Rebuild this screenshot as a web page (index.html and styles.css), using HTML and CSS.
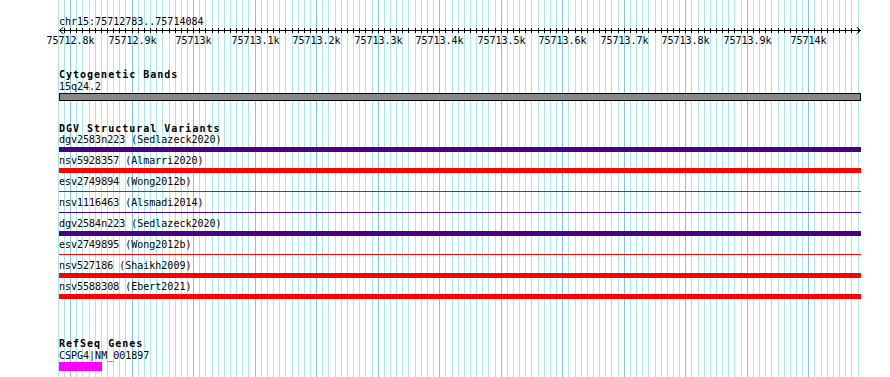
FILE: index.html
```html
<!DOCTYPE html>
<html lang="en">
<head>
  <meta charset="UTF-8" />
  <meta name="viewport" content="width=device-width, initial-scale=1.0" />
  <title>chr15:75712783..75714084</title>
  <link rel="stylesheet" href="styles.css">
</head>
<body>
  <div class="browser">
    <svg class="guides" id="guides" width="890" height="377"></svg>

    <div class="tracks">
      <div class="position">chr15:75712783..75714084</div>
      <div class="ruler">
        <svg class="axis" id="axis" width="890" height="8"></svg>
        <div class="tick-labels" id="tickLabels"></div>
      </div>

      <div class="track cyto">
        <div class="track-title">Cytogenetic Bands</div>
        <div class="label">15q24.2</div>
        <div class="band"></div>
      </div>

      <div class="track dgv">
        <div class="track-title">DGV Structural Variants</div>
        <div class="item">
          <div class="label">dgv2583n223 (Sedlazeck2020)</div>
          <div class="feature purple"></div>
        </div>
        <div class="item">
          <div class="label">nsv5928357 (Almarri2020)</div>
          <div class="feature red"></div>
        </div>
        <div class="item">
          <div class="label">esv2749894 (Wong2012b)</div>
          <div class="feature red thin"></div>
        </div>
        <div class="item">
          <div class="label">nsv1116463 (Alsmadi2014)</div>
          <div class="feature purple thin"></div>
        </div>
        <div class="item">
          <div class="label">dgv2584n223 (Sedlazeck2020)</div>
          <div class="feature purple"></div>
        </div>
        <div class="item">
          <div class="label">esv2749895 (Wong2012b)</div>
          <div class="feature red thin"></div>
        </div>
        <div class="item">
          <div class="label">nsv527186 (Shaikh2009)</div>
          <div class="feature red"></div>
        </div>
        <div class="item">
          <div class="label">nsv5588308 (Ebert2021)</div>
          <div class="feature red"></div>
        </div>
      </div>

      <div class="track refseq">
        <div class="track-title">RefSeq Genes</div>
        <div class="label">CSPG4|NM_001897</div>
        <div class="gene"></div>
      </div>
    </div>
  </div>

  <script src="app.js"></script>
</body>
</html>
```

FILE: styles.css
```css
body {
  margin: 0;
  padding: 0;
  background: #fff;
  color: #000;
  font-family: "DejaVu Sans Mono", "Liberation Mono", monospace;
  font-size: 10px;
}

.browser {
  position: relative;
  width: 890px;
  height: 377px;
  overflow: hidden;
}

.guides {
  position: absolute;
  left: 0;
  top: 0;
}

.tracks {
  position: relative;
}

.position, .label, .track-title {
  padding-left: 59px;
  height: 11px;
  line-height: 11px;
  white-space: nowrap;
}

.position {
  margin-top: 16px;
}

.track-title {
  font-weight: bold;
  letter-spacing: 1px;
}

/* ruler */
.axis {
  display: block;
}

.tick-labels {
  position: relative;
  height: 11px;
  line-height: 11px;
}

.tick-labels span {
  position: absolute;
  top: 0;
  transform: translateX(-50%);
  white-space: nowrap;
}

/* cytogenetic bands */
.cyto {
  margin-top: 23px;
}

.cyto .label {
  margin-top: 1px;
}

.band {
  margin: 1px 0 0 59px;
  width: 802px;
  height: 8px;
  box-sizing: border-box;
  border: 1px solid #000;
  background: #888;
}

/* DGV */
.dgv {
  margin-top: 22px;
}

.item {
  height: 21px;
}

.feature {
  margin: 2px 0 0 59px;
  width: 802px;
  height: 5px;
}

.feature.thin {
  margin-top: 4px;
  height: 1px;
}

.purple {
  background: #4b0082;
}

.red {
  background: #ff0000;
}

/* refseq */
.refseq {
  margin-top: 36px;
}

.refseq .label {
  margin-top: 1px;
}

.gene {
  margin: 1px 0 0 59px;
  width: 43px;
  height: 9px;
  background: #ff00ff;
}
```

FILE: app.js
```js
const winStart = 75712782;
const winEnd = 75714084;
const insideX = 59;
const insideWidth = 801;
const NS = 'http://www.w3.org/2000/svg';

function xOf(pos) {
  return Math.round(insideX + (pos - winStart) * insideWidth / (winEnd - winStart));
}

function el(name, attrs) {
  const node = document.createElementNS(NS, name);
  for (const k in attrs) node.setAttribute(k, attrs[k]);
  return node;
}

// vertical guidelines, darker every 100bp
const guides = document.getElementById('guides');
for (let p = 75712780; p <= 75714080; p += 10) {
  const major = p % 100 === 0;
  guides.appendChild(el('rect', {
    x: xOf(p), y: 0, width: 1, height: 377,
    fill: major ? '#80c4e8' : '#aae8ee'
  }));
}

// base position ruler
const axis = document.getElementById('axis');
axis.appendChild(el('rect', { x: 59, y: 3, width: 802, height: 1, fill: '#000' }));
for (let p = 75712790; p <= 75714080; p += 10) {
  axis.appendChild(el('rect', { x: xOf(p), y: 1, width: 1, height: 5, fill: '#000' }));
}
axis.appendChild(el('polyline', {
  points: '63.5,0 59.5,3.5 63.5,7', fill: 'none', stroke: '#000', 'stroke-width': 1
}));
axis.appendChild(el('polyline', {
  points: '856.5,0 860.5,3.5 856.5,7', fill: 'none', stroke: '#000', 'stroke-width': 1
}));

const labels = document.getElementById('tickLabels');
for (let p = 75712800; p <= 75714000; p += 100) {
  const span = document.createElement('span');
  span.textContent = (p / 1000) + 'k';
  span.style.left = (xOf(p) + 0.5) + 'px';
  labels.appendChild(span);
}
```
